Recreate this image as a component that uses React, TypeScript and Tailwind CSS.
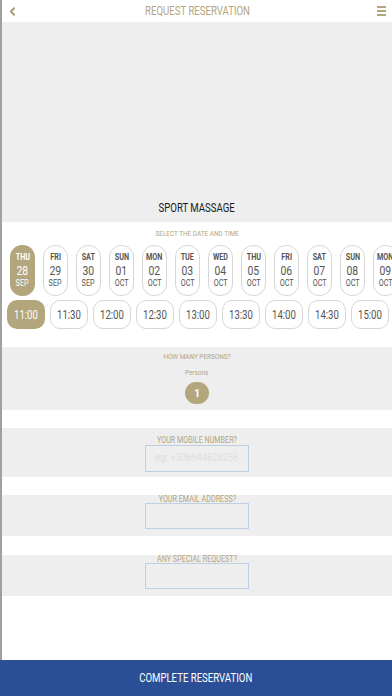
import { ChevronLeft } from "lucide-react";

const GOLD = "text-[#b3a57c]";

const DATES = [
  { d: "THU", n: "28", m: "SEP" },
  { d: "FRI", n: "29", m: "SEP" },
  { d: "SAT", n: "30", m: "SEP" },
  { d: "SUN", n: "01", m: "OCT" },
  { d: "MON", n: "02", m: "OCT" },
  { d: "TUE", n: "03", m: "OCT" },
  { d: "WED", n: "04", m: "OCT" },
  { d: "THU", n: "05", m: "OCT" },
  { d: "FRI", n: "06", m: "OCT" },
  { d: "SAT", n: "07", m: "OCT" },
  { d: "SUN", n: "08", m: "OCT" },
  { d: "MON", n: "09", m: "OCT" },
];

const TIMES = ["11:00", "11:30", "12:00", "12:30", "13:00", "13:30", "14:00", "14:30", "15:00", "15:30"];

// narrow text, the app uses a condensed face
function C({ children, className = "" }: { children: React.ReactNode; className?: string }) {
  return <span className={`inline-block scale-x-[0.8] whitespace-nowrap ${className}`}>{children}</span>;
}

function Field({ label }: { label: string }) {
  return (
    <div className="bg-[#eeeeee] h-[41px] flex flex-col items-center">
      <div className={`${GOLD} text-[9px] leading-[10px] mt-[-1px]`}>
        <C>{label}</C>
      </div>
      <div className="mt-[-1px] w-[104px] h-[26px] border border-[#bdd0e3]" />
    </div>
  );
}

export default function App() {
  return (
    <div className="w-[392px] h-[696px] flex flex-col bg-white overflow-hidden font-['Roboto',sans-serif]">
      <div className="flex-1 flex flex-col border-l-2 border-[#a0a0a0]">
        {/* header */}
        <div className="h-[22px] flex items-center justify-between pl-[4px] pr-[6px]">
          <ChevronLeft className="w-[13px] h-[13px] text-[#a89a72]" strokeWidth={3.5} />
          <div className={`${GOLD} text-[12px] leading-none`}>
            <C>REQUEST RESERVATION</C>
          </div>
          <div className="flex flex-col gap-[2px]">
            <span className="block w-[9px] h-[2px] bg-[#b3a57c]" />
            <span className="block w-[9px] h-[2px] bg-[#b3a57c]" />
            <span className="block w-[9px] h-[2px] bg-[#b3a57c]" />
          </div>
        </div>

        {/* image area */}
        <div className="h-[200px] bg-[#eeeeee] flex flex-col justify-end items-center pb-[8px]">
          <div className="text-[#1a1a1a] text-[12px] leading-none">
            <C>SPORT MASSAGE</C>
          </div>
        </div>

        {/* date + time */}
        <div className="h-[125px] flex flex-col">
          <div className={`${GOLD} text-[8px] text-center mt-[7px] leading-[10px]`}>
            <C>SELECT THE DATE AND TIME</C>
          </div>
          <div className="flex gap-[8px] pl-[8px] mt-[6px]">
            {DATES.map((x, i) => (
              <div
                key={i}
                className={`shrink-0 w-[25px] h-[51px] rounded-[12px] flex flex-col items-center justify-center ${
                  i === 0 ? "bg-[#b3a57c] text-white" : "border border-[#d6d6d6] text-[#555]"
                }`}
              >
                <C className="text-[9px] leading-[11px] font-bold">{x.d}</C>
                <C className="text-[13px] leading-[15px]">{x.n}</C>
                <C className="text-[9px] leading-[11px]">{x.m}</C>
              </div>
            ))}
          </div>
          <div className="flex gap-[5px] pl-[5px] mt-[4px]">
            {TIMES.map((t, i) => (
              <div
                key={t}
                className={`shrink-0 w-[38px] h-[29px] rounded-[10px] flex items-center justify-center text-[12px] ${
                  i === 0 ? "bg-[#b3a57c] text-white" : "border border-[#d6d6d6] text-[#555]"
                }`}
              >
                <C>{t}</C>
              </div>
            ))}
          </div>
        </div>

        {/* persons */}
        <div className="h-[63px] bg-[#eeeeee] flex flex-col items-center">
          <div className={`${GOLD} text-[8px] leading-[10px] mt-[5px]`}>
            <C>HOW MANY PERSONS?</C>
          </div>
          <div className={`${GOLD} text-[8px] leading-[10px] mt-[6px]`}>
            <C>Persons</C>
          </div>
          <div className="mt-[4px] w-[24px] h-[22px] rounded-full bg-[#b3a57c] text-white text-[10px] font-bold flex items-center justify-center">
            1
          </div>
        </div>

        <div className="h-[18px]" />
        <div className="bg-[#eeeeee] h-[49px] flex flex-col items-center">
          <div className={`${GOLD} text-[9px] leading-[10px] mt-[7px]`}>
            <C>YOUR MOBILE NUMBER?</C>
          </div>
          <div className="w-[104px] h-[27px] border border-[#bdd0e3] flex items-center justify-center overflow-visible text-[#dedede] text-[11px]">
            <span className="inline-block scale-x-[0.85] whitespace-nowrap">eg: +306944626256</span>
          </div>
        </div>
        <div className="h-[18px]" />
        <Field label="YOUR EMAIL ADDRESS?" />
        <div className="h-[19px]" />
        <Field label="ANY SPECIAL REQUEST?" />
        <div className="flex-1" />
      </div>

      {/* button */}
      <div className="h-[36px] bg-[#2a4f97] flex items-center justify-center text-white text-[12px]">
        <C>COMPLETE RESERVATION</C>
      </div>
    </div>
  );
}
